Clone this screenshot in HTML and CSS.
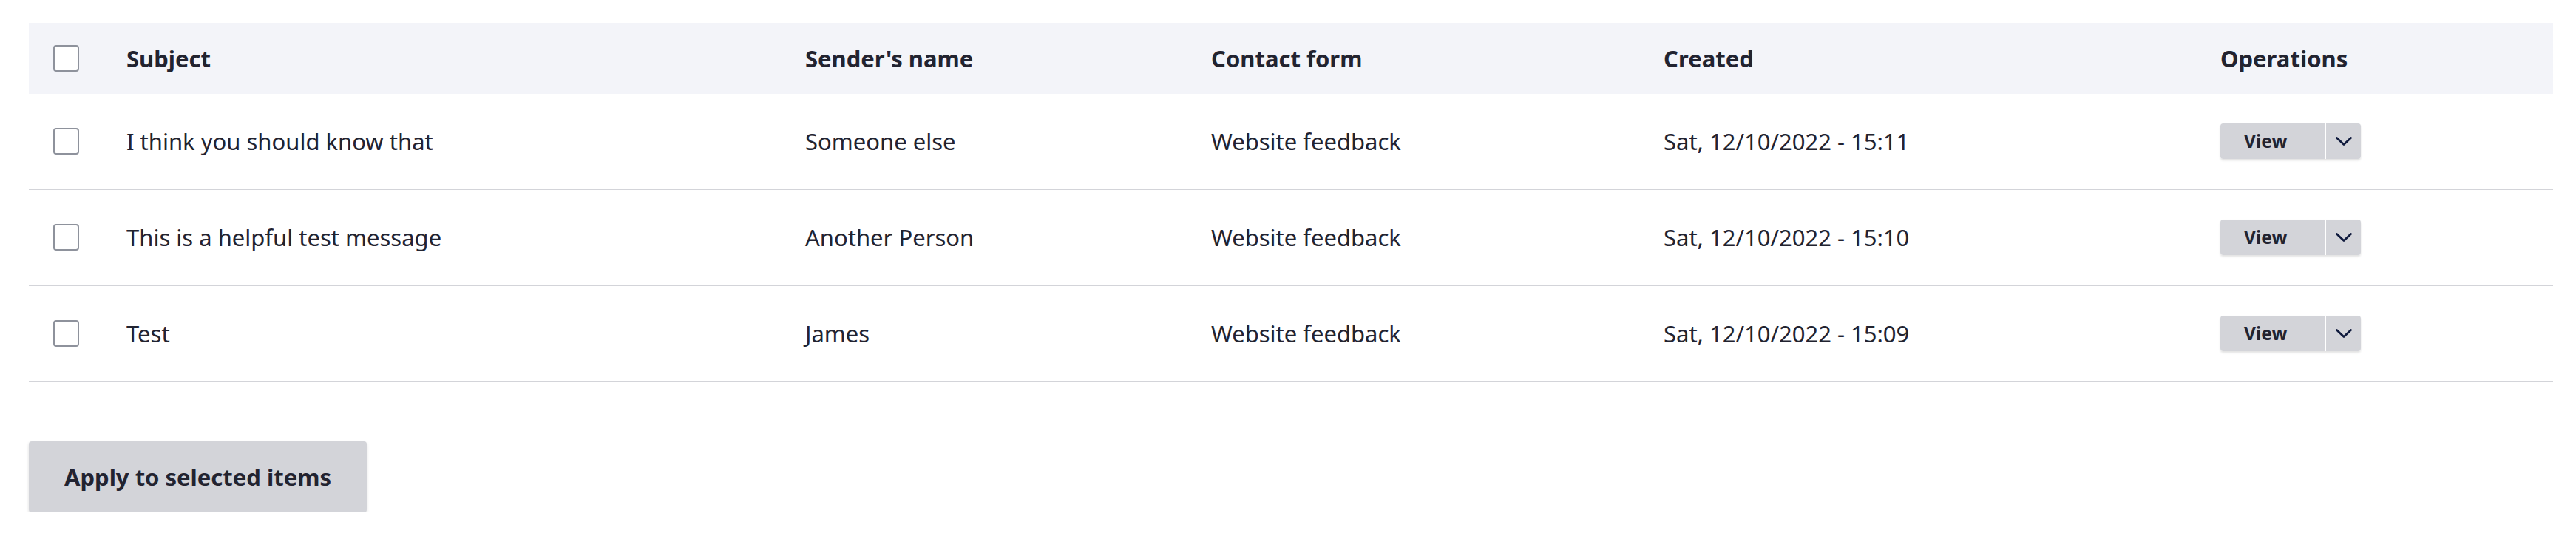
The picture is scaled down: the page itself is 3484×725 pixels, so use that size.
FILE: index.html
```html
<!DOCTYPE html>
<html lang="en">
<head>
<meta charset="utf-8">
<title>Contact messages</title>
<link rel="stylesheet" href="styles.css">
</head>
<body>
<form class="page">
  <table class="messages">
    <colgroup>
      <col class="col-select">
      <col class="col-subject">
      <col class="col-sender">
      <col class="col-form">
      <col class="col-created">
      <col class="col-ops">
    </colgroup>
    <thead>
      <tr>
        <th class="select-cell"><span class="checkbox"></span></th>
        <th>Subject</th>
        <th>Sender's name</th>
        <th>Contact form</th>
        <th>Created</th>
        <th>Operations</th>
      </tr>
    </thead>
    <tbody>
      <tr>
        <td class="select-cell"><span class="checkbox"></span></td>
        <td>I think you should know that</td>
        <td>Someone else</td>
        <td>Website feedback</td>
        <td>Sat, 12/10/2022 - 15:11</td>
        <td>
          <div class="dropbutton">
            <span class="dropbutton-action">View</span>
            <span class="dropbutton-toggle"><svg viewBox="0 0 22 12" width="22" height="12"><path d="M1.5 1.5 L11 10.5 L20.5 1.5" fill="none" stroke="#0f1a3d" stroke-width="2.8" stroke-linecap="round" stroke-linejoin="round"/></svg></span>
          </div>
        </td>
      </tr>
      <tr>
        <td class="select-cell"><span class="checkbox"></span></td>
        <td>This is a helpful test message</td>
        <td>Another Person</td>
        <td>Website feedback</td>
        <td>Sat, 12/10/2022 - 15:10</td>
        <td>
          <div class="dropbutton">
            <span class="dropbutton-action">View</span>
            <span class="dropbutton-toggle"><svg viewBox="0 0 22 12" width="22" height="12"><path d="M1.5 1.5 L11 10.5 L20.5 1.5" fill="none" stroke="#0f1a3d" stroke-width="2.8" stroke-linecap="round" stroke-linejoin="round"/></svg></span>
          </div>
        </td>
      </tr>
      <tr>
        <td class="select-cell"><span class="checkbox"></span></td>
        <td>Test</td>
        <td>James</td>
        <td>Website feedback</td>
        <td>Sat, 12/10/2022 - 15:09</td>
        <td>
          <div class="dropbutton">
            <span class="dropbutton-action">View</span>
            <span class="dropbutton-toggle"><svg viewBox="0 0 22 12" width="22" height="12"><path d="M1.5 1.5 L11 10.5 L20.5 1.5" fill="none" stroke="#0f1a3d" stroke-width="2.8" stroke-linecap="round" stroke-linejoin="round"/></svg></span>
          </div>
        </td>
      </tr>
    </tbody>
  </table>
  <div class="actions">
    <button type="button" class="button">Apply to selected items</button>
  </div>
</form>
</body>
</html>
```
FILE: styles.css
```css
html, body {
  margin: 0;
  background: #ffffff;
}

body {
  font-family: "Noto Sans", "Open Sans", sans-serif;
  font-size: 31px;
  color: #222330;
}

.page {
  padding: 31px 31px 0 39px;
}

.messages {
  width: 3414px;
  border-collapse: collapse;
  table-layout: fixed;
}

.col-select { width: 100px; }
.col-subject { width: 918px; }
.col-sender { width: 549px; }
.col-form { width: 612px; }
.col-created { width: 753px; }
.col-ops { width: 482px; }

.messages th,
.messages td {
  padding: 0 0 0 32px;
  text-align: left;
  vertical-align: middle;
  white-space: nowrap;
  line-height: 40px;
}

.messages thead tr {
  background: #f3f4f9;
}

.messages th {
  height: 96px;
  font-weight: 700;
}

.messages td {
  height: 128px;
  border-bottom: 2px solid #d3d4d9;
}

.messages .select-cell {
  padding-left: 33px;
}

.checkbox {
  display: block;
  box-sizing: border-box;
  width: 35px;
  height: 36px;
  border: 2px solid #8e929c;
  border-radius: 4px;
  background: #ffffff;
}

.dropbutton {
  display: flex;
  width: 190px;
  height: 48px;
  gap: 2px;
  border-radius: 4px;
  box-shadow: 0 2px 3px rgba(0, 0, 0, 0.12);
}

.dropbutton-action {
  display: flex;
  align-items: center;
  width: 141px;
  padding-left: 32px;
  box-sizing: border-box;
  background: #d3d4d9;
  border-radius: 4px 0 0 4px;
  font-size: 24.5px;
  font-weight: 700;
  line-height: 1;
}

.dropbutton-toggle {
  display: flex;
  align-items: center;
  justify-content: center;
  flex: 1;
  background: #d3d4d9;
  border-radius: 0 4px 4px 0;
}

.actions {
  padding-top: 80px;
}

.button {
  height: 96px;
  padding: 0 48px;
  border: 0;
  border-radius: 4px;
  background: #d3d4d9;
  color: #222330;
  font-family: "Noto Sans", "Open Sans", sans-serif;
  font-size: 31px;
  font-weight: 700;
  box-shadow: 0 2px 4px rgba(0, 0, 0, 0.14);
}
```
